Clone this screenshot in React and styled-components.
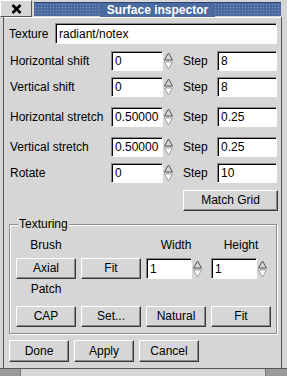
import React from "react";
import styled, { createGlobalStyle } from "styled-components";

const GlobalStyle = createGlobalStyle`
  html, body {
    margin: 0;
    padding: 0;
    background: #d6d6d6;
  }
  body {
    font-family: "Liberation Sans", Arial, sans-serif;
    font-size: 12px;
    color: #000;
  }
`;

const Window = styled.div`
  width: 287px;
  height: 376px;
  display: flex;
  flex-direction: column;
  background: #d6d6d6;
  overflow: hidden;
`;

const TitleBar = styled.div`
  height: 17px;
  display: flex;
  align-items: stretch;
  background: #d6d6d6;
`;

const CloseButton = styled.div`
  width: 30px;
  height: 15px;
  border: 1px solid;
  border-color: #fff #555 #555 #fff;
  display: flex;
  align-items: center;
  justify-content: center;
`;

const TitleStrip = styled.div`
  flex: 1;
  margin: 2px 6px 1px 2px;
  display: flex;
  align-items: center;
  justify-content: center;
  background-color: #4a6aa0;
  background-image: radial-gradient(circle, #7d97c6 0.7px, transparent 1px);
  background-size: 3px 3px;
  border-top: 1px solid #2c4470;
`;

const TitleText = styled.div`
  background: #4a6aa0;
  color: #fff;
  font-weight: bold;
  font-size: 12px;
  padding: 0 7px;
  line-height: 14px;
`;

const Middle = styled.div`
  flex: 1;
  display: flex;
`;

const SideFrame = styled.div`
  width: 1px;
  flex: none;
  background: #555;
  ${p => (p.side === "left" ? "margin-left: 3px;" : "margin-right: 5px;")}
`;

const Content = styled.div`
  flex: 1;
  display: flex;
  flex-direction: column;
  padding: 0 0 0 5px;
  border-top: 1px solid #fff;
`;

const BottomFrame = styled.div`
  height: 7px;
  display: flex;
  border-top: 1px solid #555;
`;

const Grip = styled.div`
  width: ${p => p.w}px;
  background: ${p => (p.dark ? "#9a9a9a" : "#d6d6d6")};
  border-right: ${p => (p.divider ? "1px solid #777" : "none")};
  border-left: ${p => (p.left ? "1px solid #777" : "none")};
  flex: ${p => (p.grow ? 1 : "none")};
`;

const Row = styled.div`
  display: flex;
  align-items: center;
  margin-top: ${p => p.mt}px;
  height: ${p => p.h || 20}px;
`;

const Label = styled.div`
  width: ${p => p.w}px;
  flex: none;
  padding-left: ${p => p.pl || 0}px;
  box-sizing: border-box;
  white-space: nowrap;
`;

const Entry = styled.div`
  width: ${p => p.w}px;
  height: ${p => p.h || 20}px;
  box-sizing: border-box;
  flex: none;
  background: #fff;
  border: 1px solid;
  border-color: #8a8a8a #fff #fff #8a8a8a;
  box-shadow: inset 1px 1px 0 #000;
  padding-left: 3px;
  display: flex;
  align-items: center;
  white-space: nowrap;
  overflow: hidden;
`;

const ArrowBox = styled.div`
  width: ${p => p.w || 10}px;
  flex: none;
  display: flex;
  justify-content: center;
`;

const Button = styled.div`
  width: ${p => p.w || 60}px;
  height: ${p => p.h || 22}px;
  box-sizing: border-box;
  flex: none;
  border: 1px solid;
  border-color: #fff #3a3a3a #3a3a3a #fff;
  box-shadow: inset -1px -1px 0 #8a8a8a;
  display: flex;
  align-items: center;
  justify-content: center;
  padding-bottom: 1px;
`;

const ButtonRow = styled.div`
  display: flex;
  gap: 5px;
  margin-top: ${p => p.mt || 0}px;
  padding-left: ${p => p.pl || 0}px;
`;

const Frame = styled.fieldset`
  margin: 6px 0 0 0;
  width: 268px;
  height: 117px;
  box-sizing: border-box;
  padding: 0 0 0 6px;
  border: 1px solid #8d8d8d;
  box-shadow: inset 1px 1px 0 #fff, 1px 1px 0 #fff;
  display: block;
  min-inline-size: 0;
`;

const Legend = styled.legend`
  padding: 0 1px;
  margin-left: 2px;
  background: #d6d6d6;
  line-height: 14px;
`;

const TexGrid = styled.div`
  display: grid;
  grid-template-columns: repeat(4, 60px);
  column-gap: 5px;
  margin-top: 7px;
`;

const ColLabel = styled.div`
  text-align: center;
  height: 14px;
  line-height: 14px;
  margin: ${p => p.m};
`;

const SpinCell = styled.div`
  display: flex;
  align-items: center;
`;

const SpinArrows = () => (
  <svg width="9" height="18" viewBox="0 0 9 18">
    <path d="M4.5 1 L8.5 8 L0.5 8 Z" fill="#d6d6d6" stroke="#555" strokeWidth="1" />
    <path d="M0.5 10 L8.5 10 L4.5 17 Z" fill="#fff" stroke="#a0a0a0" strokeWidth="1" />
  </svg>
);

const CloseIcon = () => (
  <svg width="11" height="10" viewBox="0 0 11 10">
    <path d="M1.5 1 L9.5 9 M9.5 1 L1.5 9" stroke="#000" strokeWidth="2.6" />
  </svg>
);

const SpinRow = ({ label, value, step, mt }) => (
  <Row mt={mt}>
    <Label w={102} pl={1}>{label}</Label>
    <Entry w={52}>{value}</Entry>
    <ArrowBox w={10}>
      <SpinArrows />
    </ArrowBox>
    <Label w={44} pl={10}>Step</Label>
    <Entry w={60}>{step}</Entry>
  </Row>
);

const GridSpin = ({ value }) => (
  <SpinCell>
    <Entry w={46} h={21}>{value}</Entry>
    <ArrowBox w={10}>
      <SpinArrows />
    </ArrowBox>
  </SpinCell>
);

export default function App() {
  return (
    <>
      <GlobalStyle />
      <Window>
        <TitleBar>
          <CloseButton>
            <CloseIcon />
          </CloseButton>
          <TitleStrip>
            <TitleText>Surface inspector</TitleText>
          </TitleStrip>
        </TitleBar>
        <Middle>
          <SideFrame side="left" />
          <Content>
            <Row mt={5} h={21}>
              <Label w={46}>Texture</Label>
              <Entry w={222} h={21}>radiant/notex</Entry>
            </Row>
            <SpinRow label="Horizontal shift" value="0" step="8" mt={7} />
            <SpinRow label="Vertical shift" value="0" step="8" mt={6} />
            <SpinRow label="Horizontal stretch" value="0.50000" step="0.25" mt={10} />
            <SpinRow label="Vertical stretch" value="0.50000" step="0.25" mt={10} />
            <SpinRow label="Rotate" value="0" step="10" mt={6} />
            <ButtonRow mt={7} pl={174}>
              <Button w={95} h={21}>Match Grid</Button>
            </ButtonRow>
            <Frame>
              <Legend>Texturing</Legend>
              <TexGrid>
                <ColLabel m="0 0 6px 0">Brush</ColLabel>
                <div />
                <ColLabel m="0 0 6px 0">Width</ColLabel>
                <ColLabel m="0 0 6px 0">Height</ColLabel>
                <Button h={21}>Axial</Button>
                <Button h={21}>Fit</Button>
                <GridSpin value="1" />
                <GridSpin value="1" />
                <ColLabel m="3px 0 10px 0">Patch</ColLabel>
                <div />
                <div />
                <div />
                <Button h={21}>CAP</Button>
                <Button h={21}>Set...</Button>
                <Button h={21}>Natural</Button>
                <Button h={21}>Fit</Button>
              </TexGrid>
            </Frame>
            <ButtonRow mt={6}>
              <Button>Done</Button>
              <Button>Apply</Button>
              <Button>Cancel</Button>
            </ButtonRow>
          </Content>
          <SideFrame side="right" />
        </Middle>
        <BottomFrame>
          <Grip w={20} dark divider />
          <Grip grow />
          <Grip w={21} dark left />
        </BottomFrame>
      </Window>
    </>
  );
}
